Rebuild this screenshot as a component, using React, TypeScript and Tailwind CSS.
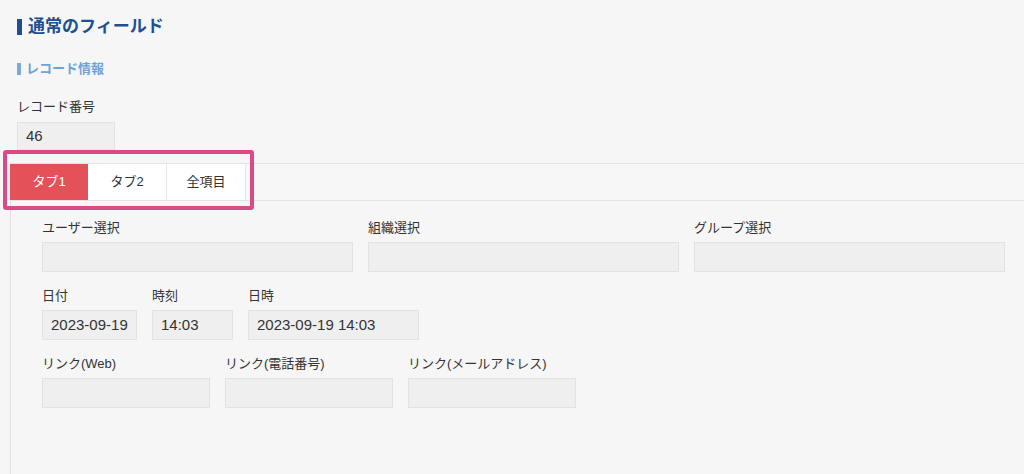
import React from "react";

const font = { fontFamily: '"Liberation Sans", "Noto Sans CJK JP", sans-serif' };

function Field({ label, width, value }: { label: string; width: string; value?: string }) {
  return (
    <div className={`flex flex-col ${width}`}>
      <div className="h-[20px] leading-[20px] text-[13px] text-[#333] whitespace-nowrap">{label}</div>
      <div className="mt-[4px] h-[30px] bg-[#efefef] border border-[#e2e2e2] px-[8px] flex items-center text-[15px] text-[#333] whitespace-nowrap">
        {value ?? ""}
      </div>
    </div>
  );
}

export default function App() {
  return (
    <div className="relative min-h-screen h-[474px] overflow-hidden bg-[#f6f6f6]" style={font}>
      <div className="pl-[17px] pt-[15px]">
        <div className="flex items-center h-[24px]">
          <span className="block shrink-0 w-[5px] h-[16px] bg-[#1d4f91] mr-[6px]" />
          <span className="text-[17px] leading-[24px] font-bold text-[#1d4f91]">通常のフィールド</span>
        </div>
        <div className="flex items-center h-[20px] mt-[20px]">
          <span className="block shrink-0 w-[4px] h-[12px] bg-[#7aa9dc] mr-[5px]" />
          <span className="text-[13px] leading-[20px] font-bold text-[#6ea2d8]">レコード情報</span>
        </div>
        <div className="mt-[18px] h-[20px] leading-[20px] text-[13px] text-[#333]">レコード番号</div>
        <div className="mt-[5px] w-[98px] h-[28px] bg-[#efefef] border border-[#e2e2e2] px-[8px] flex items-center text-[15px] text-[#333]">
          46
        </div>
      </div>

      <div className="ml-[10px] mt-[13px] flex border-t border-b border-[#e3e3e3] bg-[#f7f7f7]">
        <div className="w-[78px] h-[36px] flex items-center justify-center bg-[#e45158] text-white text-[13px]">タブ1</div>
        <div className="w-[79px] h-[36px] flex items-center justify-center bg-white border-r border-[#e8e8e8] text-[#333] text-[13px]">タブ2</div>
        <div className="w-[79px] h-[36px] flex items-center justify-center bg-white border-r border-[#e8e8e8] text-[#333] text-[13px]">全項目</div>
      </div>

      <div className="ml-[10px] border-l border-[#e0e0e0] pl-[31px] pt-[17px] pr-[19px] h-full">
        <div className="flex gap-[15px]">
          <Field label="ユーザー選択" width="w-[311px]" />
          <Field label="組織選択" width="w-[311px]" />
          <Field label="グループ選択" width="w-[311px]" />
        </div>
        <div className="flex gap-[15px] mt-[14px]">
          <Field label="日付" width="w-[95px]" value="2023-09-19" />
          <Field label="時刻" width="w-[81px]" value="14:03" />
          <Field label="日時" width="w-[171px]" value="2023-09-19 14:03" />
        </div>
        <div className="flex gap-[15px] mt-[14px]">
          <Field label="リンク(Web)" width="w-[168px]" />
          <Field label="リンク(電話番号)" width="w-[168px]" />
          <Field label="リンク(メールアドレス)" width="w-[168px]" />
        </div>
      </div>

      <div className="absolute left-[3px] top-[150px] w-[251px] h-[60px] border-[4px] border-[#da4a85] rounded-[3px] pointer-events-none" />
    </div>
  );
}
